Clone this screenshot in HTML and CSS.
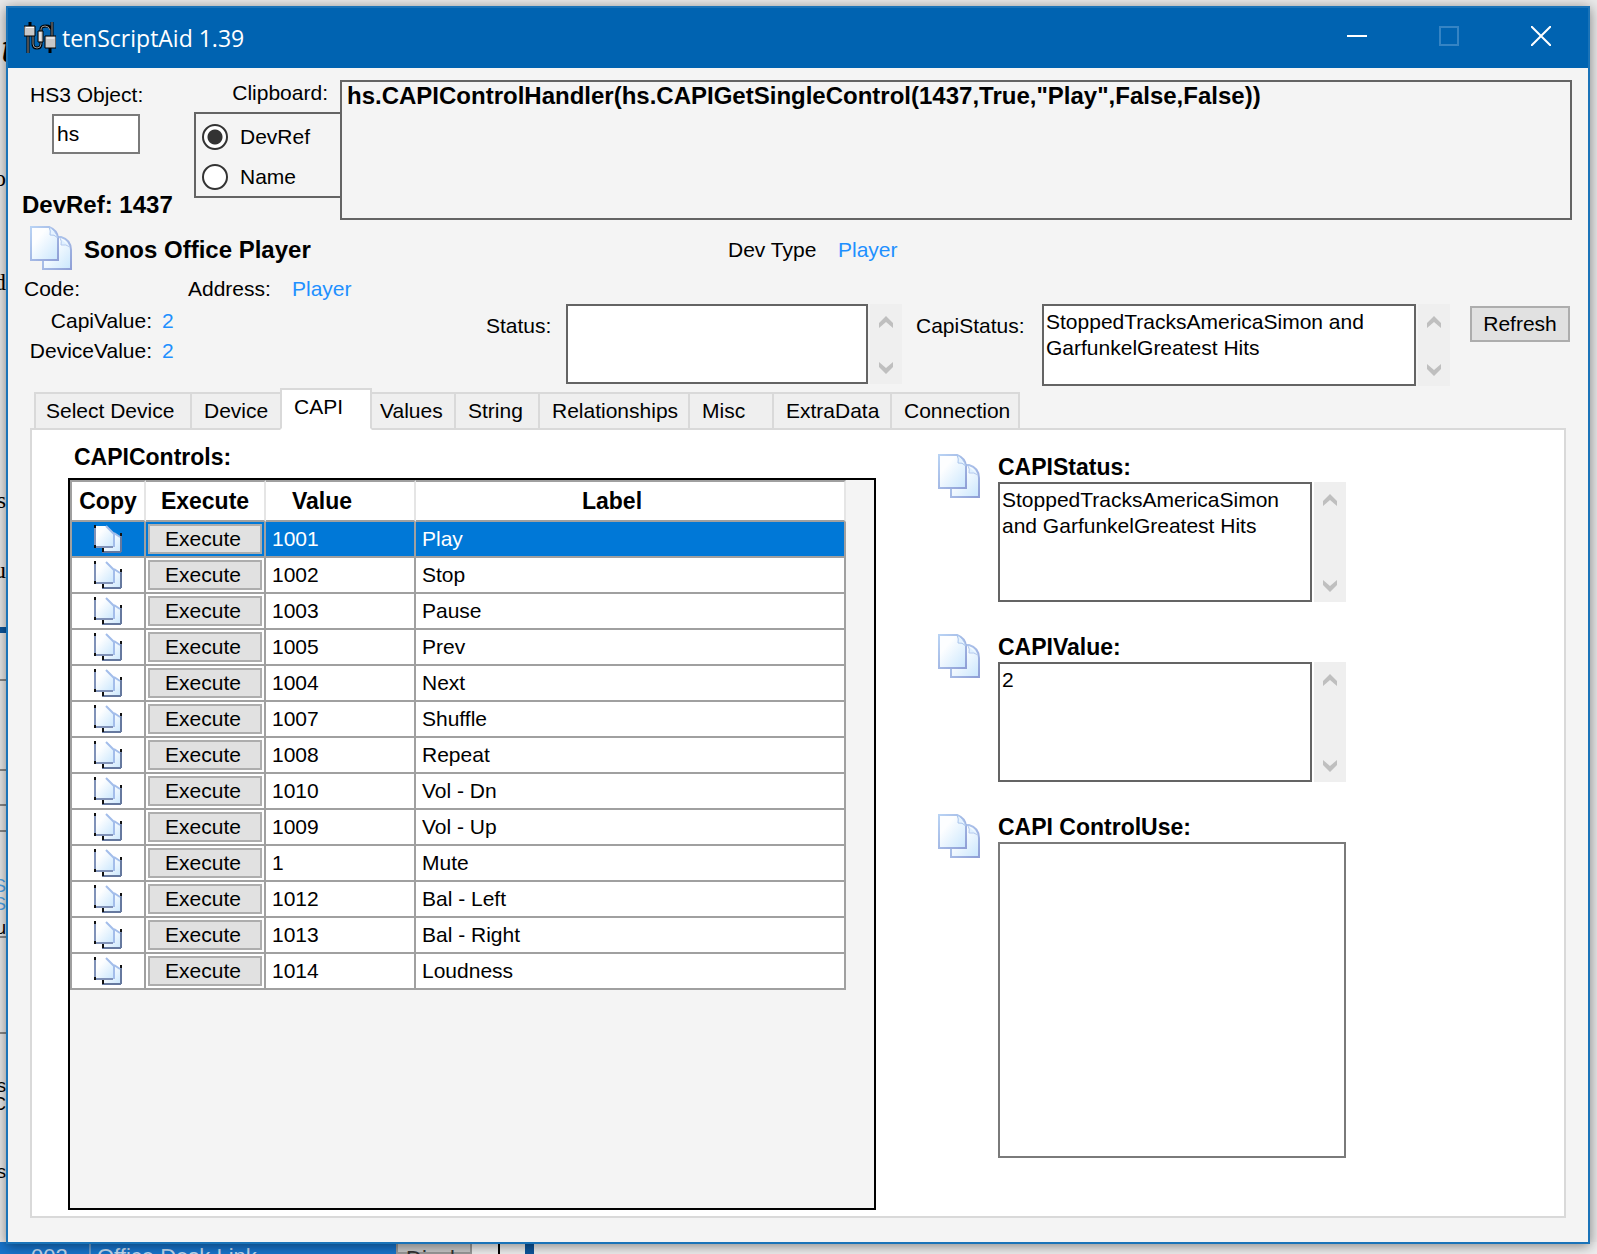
FILE: index.html
```html
<!DOCTYPE html>
<html lang="en">
<head>
<meta charset="utf-8">
<title>tenScriptAid 1.39</title>
<link rel="stylesheet" href="styles.css">
</head>
<body>
<svg class="defs" aria-hidden="true">
  <defs>
    <linearGradient id="paper" x1="0" y1="0" x2="1" y2="1">
      <stop offset="0.3" stop-color="#fdfeff"/><stop offset="1" stop-color="#c9e6fd"/>
    </linearGradient>
    <linearGradient id="edge" x1="0" y1="0" x2="1" y2="1">
      <stop offset="0" stop-color="#b9d3f4"/><stop offset="1" stop-color="#8f9fd6"/>
    </linearGradient>
    <symbol id="copy" viewBox="0 0 42 44">
      <path d="M13 11h18q10 3 10 13v19H13z" fill="url(#paper)" stroke="url(#edge)" stroke-width="2"/>
      <path d="M30 12q2 3 1 7q5-1 9 2" fill="#dff0ff" stroke="#b4c9ee"/>
      <path d="M1 1h18q8 3 9 11v22H1z" fill="url(#paper)" stroke="url(#edge)" stroke-width="2"/>
      <path d="M19 1q2 4 1 8q4-1 8 3q-3-8-9-11z" fill="#e6f3ff" stroke="#a9c4ec"/>
    </symbol>
    <symbol id="copy-small" viewBox="0 0 28 28">
      <path d="M9 8h11l7 5v14H9z" fill="url(#paper)"/>
      <path d="M9 21v6h18M27 10v17" fill="none" stroke="#66799f" stroke-width="2"/>
      <path d="M8 22h2v5H8zM26 8h2v3h-2z" fill="#111"/>
      <path d="M1 1h11l8 8v13H1z" fill="url(#paper)"/>
      <path d="M12 1l8 8v13" fill="none" stroke="#a3bdea" stroke-width="2"/>
      <path d="M20 8l6 4" fill="none" stroke="#a3bdea" stroke-width="2"/>
      <path d="M1 0v22h18" fill="none" stroke="#8092b8" stroke-width="2"/>
      <path d="M0 0h2v3H0zM0 20h2v3H0z" fill="#111"/>
    </symbol>
    <symbol id="up" viewBox="0 0 14 12"><path d="M0 12V7l7-7 7 7v5L7 6z" fill="#bfbfbf"/></symbol>
    <symbol id="down" viewBox="0 0 14 12"><path d="M0 0v5l7 7 7-7V0L7 6z" fill="#bfbfbf"/></symbol>
  </defs>
</svg>

<div class="behind" aria-hidden="true">
  <span class="scrap scrap-title">t</span>
  <span class="scrap scrap-1">o</span>
  <span class="scrap scrap-2">d</span>
  <span class="scrap scrap-3">s</span>
  <span class="scrap scrap-4">u</span>
  <span class="scrap small blue scrap-5">S</span>
  <span class="scrap small blue scrap-6">S</span>
  <span class="scrap small scrap-7">u</span>
  <span class="scrap small scrap-8">s</span>
  <span class="scrap small scrap-9">C</span>
  <span class="scrap small scrap-10">s</span>
  <span class="behind-bar"></span>
  <span class="behind-pane behind-pane-1"></span>
  <span class="behind-pane behind-pane-2"></span>
  <span class="behind-pane behind-pane-3"></span>
  <span class="behind-row">
    <span class="behind-id">002</span><span class="behind-name">Office Desk Link</span><span class="behind-button">Display</span><span class="behind-gap"></span><span class="behind-edge"></span>
  </span>
</div>

<div class="window">
  <header class="titlebar">
    <svg class="app-icon" viewBox="0 0 32 32" aria-hidden="true">
      <g fill="none" stroke="#000" stroke-width="3">
        <path d="M4 14v17M6 0v4M28 0v14M26 26v5M9 14v8q0 4 4 4t4-4v-3M17 9V7q0-3 5-3t5 4"/>
      </g>
      <g fill="none" stroke="#999"><path d="M4 14v17M28 0v14M9 14v8q0 4 4 4t4-4v-3M17 9V7q0-3 4-3t5 4"/></g>
      <path d="M0 4h11v10H0zM21 14h11v12H21zM14 9h5v11h-5z" fill="#c8c8c8" stroke="#000"/>
      <path d="M2 5.500h8M22.500 16h8M16 10v9" stroke="#fff"/>
    </svg>
    <h1 class="title">tenScriptAid 1.39</h1>
    <button class="caption" aria-label="Minimize"><svg viewBox="0 0 20 20"><path d="M0 10h20" stroke="#fff" stroke-width="2"/></svg></button>
    <button class="caption" aria-label="Maximize" disabled><svg viewBox="0 0 20 20"><path d="M1 1h18v18H1z" fill="none" stroke="#3584c4" stroke-width="2"/></svg></button>
    <button class="caption" aria-label="Close"><svg viewBox="0 0 20 20"><path d="M0 0l20 20M20 0L0 20" stroke="#fff" stroke-width="2"/></svg></button>
  </header>

  <main class="form">
    <section class="top">
      <div class="object">
        <label for="hs">HS3 Object:</label>
        <input id="hs" class="box object-input" type="text" value="hs">
        <strong class="devref">DevRef: 1437</strong>
      </div>
      <div class="clip">
        <label for="clipboard">Clipboard:</label>
        <div class="clip-options" role="radiogroup" aria-label="Clipboard">
          <label class="radio"><input type="radio" name="mode" checked>DevRef</label>
          <label class="radio"><input type="radio" name="mode">Name</label>
        </div>
      </div>
      <textarea id="clipboard" class="box clipboard" readonly>hs.CAPIControlHandler(hs.CAPIGetSingleControl(1437,True,"Play",False,False))</textarea>
    </section>

    <section class="device">
      <button class="icon-button" aria-label="Copy device"><svg><use href="#copy"/></svg></button>
      <strong class="device-name">Sonos Office Player</strong>
      <span class="device-type">Dev Type</span>
      <span class="value">Player</span>
    </section>

    <section class="details">
      <div class="facts">
        <div class="fact-line"><span class="code">Code:</span><span class="address">Address:</span><span class="value">Player</span></div>
        <div class="fact"><span>CapiValue:</span><span class="value">2</span></div>
        <div class="fact"><span>DeviceValue:</span><span class="value">2</span></div>
      </div>
      <div class="statuses">
        <label for="status">Status:</label>
        <div class="scrollbox status-box">
          <textarea id="status" class="box"></textarea>
          <div class="scrollbar"><svg><use href="#up"/></svg><svg><use href="#down"/></svg></div>
        </div>
        <label for="capi-status" class="capi-label">CapiStatus:</label>
        <div class="scrollbox capi-box">
          <textarea id="capi-status" class="box">StoppedTracksAmericaSimon and GarfunkelGreatest Hits</textarea>
          <div class="scrollbar"><svg><use href="#up"/></svg><svg><use href="#down"/></svg></div>
        </div>
        <button class="push refresh">Refresh</button>
      </div>
    </section>

    <nav class="tabs" role="tablist">
      <button class="tab tab-first" role="tab">Select Device</button>
      <button class="tab tab-medium" role="tab">Device</button>
      <button class="tab selected" role="tab" aria-selected="true">CAPI</button>
      <button class="tab tab-tight" role="tab">Values</button>
      <button class="tab" role="tab">String</button>
      <button class="tab tab-wide" role="tab">Relationships</button>
      <button class="tab" role="tab">Misc</button>
      <button class="tab tab-extra" role="tab">ExtraData</button>
      <button class="tab tab-last" role="tab">Connection</button>
    </nav>

    <section class="panel" role="tabpanel">
      <div class="controls">
        <h2 class="heading">CAPIControls:</h2>
        <div class="grid">
          <table>
            <colgroup><col class="col-copy"><col class="col-execute"><col class="col-value"><col></colgroup>
            <thead><tr><th>Copy</th><th>Execute</th><th class="th-sort">Value</th><th class="th-sort">Label</th></tr></thead>
            <tbody>
              <tr class="current"><td class="copy"><svg><use href="#copy-small"/></svg></td><td class="run"><button class="push">Execute</button></td><td>1001</td><td>Play</td></tr>
              <tr><td class="copy"><svg><use href="#copy-small"/></svg></td><td class="run"><button class="push">Execute</button></td><td>1002</td><td>Stop</td></tr>
              <tr><td class="copy"><svg><use href="#copy-small"/></svg></td><td class="run"><button class="push">Execute</button></td><td>1003</td><td>Pause</td></tr>
              <tr><td class="copy"><svg><use href="#copy-small"/></svg></td><td class="run"><button class="push">Execute</button></td><td>1005</td><td>Prev</td></tr>
              <tr><td class="copy"><svg><use href="#copy-small"/></svg></td><td class="run"><button class="push">Execute</button></td><td>1004</td><td>Next</td></tr>
              <tr><td class="copy"><svg><use href="#copy-small"/></svg></td><td class="run"><button class="push">Execute</button></td><td>1007</td><td>Shuffle</td></tr>
              <tr><td class="copy"><svg><use href="#copy-small"/></svg></td><td class="run"><button class="push">Execute</button></td><td>1008</td><td>Repeat</td></tr>
              <tr><td class="copy"><svg><use href="#copy-small"/></svg></td><td class="run"><button class="push">Execute</button></td><td>1010</td><td>Vol - Dn</td></tr>
              <tr><td class="copy"><svg><use href="#copy-small"/></svg></td><td class="run"><button class="push">Execute</button></td><td>1009</td><td>Vol - Up</td></tr>
              <tr><td class="copy"><svg><use href="#copy-small"/></svg></td><td class="run"><button class="push">Execute</button></td><td>1</td><td>Mute</td></tr>
              <tr><td class="copy"><svg><use href="#copy-small"/></svg></td><td class="run"><button class="push">Execute</button></td><td>1012</td><td>Bal - Left</td></tr>
              <tr><td class="copy"><svg><use href="#copy-small"/></svg></td><td class="run"><button class="push">Execute</button></td><td>1013</td><td>Bal - Right</td></tr>
              <tr><td class="copy"><svg><use href="#copy-small"/></svg></td><td class="run"><button class="push">Execute</button></td><td>1014</td><td>Loudness</td></tr>
            </tbody>
          </table>
        </div>
      </div>

      <div class="readouts">
        <div class="readout">
          <button class="icon-button" aria-label="Copy CAPIStatus"><svg><use href="#copy"/></svg></button>
          <div class="field">
            <label class="heading" for="r-status">CAPIStatus:</label>
            <div class="scrollbox">
              <textarea id="r-status" class="box">StoppedTracksAmericaSimon and GarfunkelGreatest Hits</textarea>
              <div class="scrollbar"><svg><use href="#up"/></svg><svg><use href="#down"/></svg></div>
            </div>
          </div>
        </div>
        <div class="readout">
          <button class="icon-button" aria-label="Copy CAPIValue"><svg><use href="#copy"/></svg></button>
          <div class="field">
            <label class="heading" for="r-value">CAPIValue:</label>
            <div class="scrollbox">
              <textarea id="r-value" class="box">2</textarea>
              <div class="scrollbar"><svg><use href="#up"/></svg><svg><use href="#down"/></svg></div>
            </div>
          </div>
        </div>
        <div class="readout">
          <button class="icon-button" aria-label="Copy CAPI ControlUse"><svg><use href="#copy"/></svg></button>
          <div class="field">
            <label class="heading" for="r-use">CAPI ControlUse:</label>
            <textarea id="r-use" class="box use-box"></textarea>
          </div>
        </div>
      </div>
    </section>
  </main>
</div>
</body>
</html>
```
FILE: styles.css
```css
* { box-sizing: border-box; }

body {
  margin: 0;
  min-height: 100vh;
  display: flex;
  padding: 6px 7px 10px 6px;
  background: #e9e9e9;
  color: #000;
  font: 21px/26px "Liberation Sans", Arial, sans-serif;
}

button, input, textarea { font: inherit; color: inherit; margin: 0; }
button { padding: 0; border: 0; background: none; }
textarea { display: block; resize: none; overflow: hidden; }
svg { display: block; }
.defs { position: absolute; width: 0; height: 0; }

/* the window behind, showing at the left and bottom edges */
.behind {
  position: absolute;
  inset: 0;
  overflow: hidden;
  font: 24px/28px "Liberation Serif", serif;
}
.scrap { position: absolute; right: calc(100% - 6px); white-space: nowrap; }
.scrap.small { font: 18px/20px "Liberation Sans", sans-serif; }
.scrap.blue { color: #4aa3e8; }
.scrap-title { top: 32px; right: calc(100% - 14px); font: italic bold 44px/32px "Liberation Serif", serif; }
.scrap-1 { top: 164px; }
.scrap-2 { top: 268px; }
.scrap-3 { top: 486px; }
.scrap-4 { top: 556px; }
.scrap-5 { top: 876px; }
.scrap-6 { top: 894px; }
.scrap-7 { top: 918px; }
.scrap-8 { top: 1076px; }
.scrap-9 { top: 1094px; }
.scrap-10 { top: 1162px; }
.behind-bar { position: absolute; top: 627px; left: 0; width: 6px; height: 6px; background: #0d559b; }
.behind-pane { position: absolute; left: 0; width: 6px; border: solid #888; border-width: 2px 0; }
.behind-pane-1 { top: 679px; height: 92px; }
.behind-pane-2 { top: 804px; height: 28px; }
.behind-pane-3 { top: 936px; height: 98px; }
.behind-row {
  position: absolute;
  left: 0;
  right: 0;
  bottom: 0;
  height: 12px;
  display: flex;
  overflow: hidden;
  background: #eee;
  font: 22px/26px "Liberation Sans", sans-serif;
  color: #c5dcf2;
}
.behind-row span { flex: none; padding-top: 2px; }
.behind-id { width: 91px; padding-left: 31px; background: #1774cc; border-right: 2px solid #6a9ccc; }
.behind-name { width: 305px; padding-left: 6px; background: #1774cc; }
.behind-button { width: 76px; padding-left: 8px; background: #c9c9c9; border: 2px solid #999; color: #333; }
.behind-gap { width: 28px; border-right: 2px solid #000; }
.behind-edge { width: 34px; border-right: 9px solid #0d559b; }

.window {
  position: relative;
  flex: 1;
  min-width: 0;
  display: flex;
  flex-direction: column;
  border: 2px solid #1a73b8;
  background: #f4f4f4;
  box-shadow: 0 2px 12px rgba(0, 0, 0, 0.45);
}

.titlebar {
  display: flex;
  align-items: center;
  height: 60px;
  padding: 0 1px 0 16px;
  background: #0063b1;
  color: #fff;
}
.app-icon { width: 32px; height: 32px; }
.title { flex: 1; margin: 0 0 0 6px; font: 23px/32px "Open Sans", "Noto Sans", sans-serif; }
.caption { align-self: flex-start; width: 92px; height: 56px; display: grid; place-items: center; }
.caption svg { width: 20px; height: 20px; }

.form { flex: 1; display: flex; flex-direction: column; padding: 12px 16px 24px; }

.box { border: 2px solid #646464; border-radius: 0; background: #fff; outline: 0; }
.value { color: #1e90ff; }
.heading { font: bold 23px/26px "Liberation Sans", Arial, sans-serif; margin: 0; }
strong { font: bold 24px/26px "Liberation Sans", Arial, sans-serif; }

.top { display: flex; height: 140px; }
.object { width: 170px; display: flex; flex-direction: column; padding: 2px 0 2px 6px; }
.object-input { width: 88px; height: 40px; margin: 6px 0 0 22px; padding: 0 3px; border-color: #7a7a7a; }
.object .devref { margin: auto 0 0 -8px; white-space: nowrap; }
.clip { width: 146px; }
.clip label { display: block; text-align: right; padding-right: 12px; }
.clip-options { height: 86px; margin-top: 6px; padding: 3px 6px; border: 2px solid #646464; border-right: 0; }
.clip .radio { display: flex; align-items: center; height: 40px; gap: 12px; padding: 0; }
.radio input {
  appearance: none;
  width: 26px;
  height: 26px;
  border: 2px solid #333;
  border-radius: 50%;
  background: #fff;
}
.radio input:checked { background: radial-gradient(circle, #333 0 7px, #fff 8px); }
.clipboard { flex: 1; min-width: 0; padding: 0 5px; background: #f4f4f4; font: bold 24px/28px "Liberation Sans", Arial, sans-serif; }

.device { display: flex; align-items: center; height: 44px; margin: 6px 0 0 6px; }
.device > :not(.icon-button) { padding-top: 4px; }
.icon-button { flex: none; width: 42px; height: 44px; }
.icon-button svg { width: 42px; height: 44px; }
.device-name { width: 656px; padding-left: 12px; }
.device-type { width: 110px; }

.details { display: flex; height: 118px; }
.facts { width: 462px; padding-top: 2px; }
.fact-line { display: flex; height: 34px; align-items: center; }
.code { width: 164px; }
.address { width: 104px; }
.fact { display: flex; height: 30px; align-items: center; gap: 10px; }
.fact span:first-child { width: 128px; text-align: right; }
.statuses { flex: 1; display: flex; align-items: flex-start; padding-top: 34px; }
.statuses > label { width: 80px; padding-top: 9px; }
.statuses > .capi-label { width: 126px; margin-left: 14px; }
.scrollbox { display: flex; gap: 2px; }
.scrollbox textarea { flex: 1; min-width: 0; padding: 3px 2px; }
.status-box { width: 336px; height: 80px; }
.capi-box { width: 408px; height: 82px; }
.scrollbar {
  width: 32px;
  display: flex;
  flex-direction: column;
  justify-content: space-between;
  align-items: center;
  padding: 12px 0 10px;
  background: #efefef;
}
.scrollbar svg { width: 14px; height: 12px; }
.push { border: 2px solid #adadad; background: #e1e1e1; text-align: center; }
.refresh { width: 100px; height: 36px; margin: 2px 2px 0 auto; }

.tabs { display: flex; align-items: flex-end; height: 42px; margin: 0 0 -2px 10px; position: relative; }
.tab {
  width: 84px;
  height: 38px;
  padding-left: 12px;
  border: 2px solid #d9d9d9;
  border-left: 0;
  background: #efefef;
  text-align: left;
  white-space: nowrap;
}
.tab-first { width: 158px; padding-left: 10px; border-left: 2px solid #d9d9d9; }
.tab-medium { width: 90px; }
.tab-tight { padding-left: 8px; }
.tab-wide { width: 150px; }
.tab-extra { width: 118px; }
.tab-last { width: 128px; }
.tab.selected {
  width: 92px;
  height: 42px;
  margin-left: -2px;
  padding-bottom: 4px;
  border-left: 2px solid #d9d9d9;
  border-bottom-color: #fff;
  background: #fff;
}

.panel {
  flex: 1;
  display: flex;
  margin: 0 6px 0 6px;
  padding: 14px 34px 6px 36px;
  border: 2px solid #d9d9d9;
  background: #fff;
}
.controls { width: 808px; display: flex; flex-direction: column; }
.controls .heading { margin: 0 0 8px 6px; }
.grid { flex: 1; padding-right: 28px; border: 2px solid #000; background: #f4f4f4; }
table { width: 100%; table-layout: fixed; border-collapse: separate; border-spacing: 0; border-left: 2px solid #a0a0a0; }
.col-copy { width: 74px; }
.col-execute { width: 120px; }
.col-value { width: 150px; }
th {
  height: 42px;
  padding: 0;
  border-top: 2px solid #a0a0a0;
  border-bottom: 2px solid #a0a0a0;
  border-right: 2px solid #e5e5e5;
  background: #fff;
  font: bold 23px/26px "Liberation Sans", Arial, sans-serif;
}
.th-sort { padding-right: 36px; }
td { height: 36px; padding: 0 6px; border: solid #a0a0a0; border-width: 0 2px 2px 0; background: #fff; }
td.copy svg { width: 28px; height: 28px; margin: 0 auto; }
td.run { padding: 2px; }
td .push { display: block; width: 100%; height: 30px; line-height: 26px; padding-right: 4px; }
.current td { background: #0078d7; color: #fff; }
.current .push { color: #000; }

.readouts { flex: 1; margin: 10px 0 0 62px; display: flex; flex-direction: column; gap: 32px; }
.readout { display: flex; gap: 18px; }
.field { width: 348px; }
.field .heading { display: block; margin-bottom: 2px; }
.field .scrollbox { height: 120px; }
.use-box { width: 100%; height: 316px; border-color: #7a7a7a; }
```
